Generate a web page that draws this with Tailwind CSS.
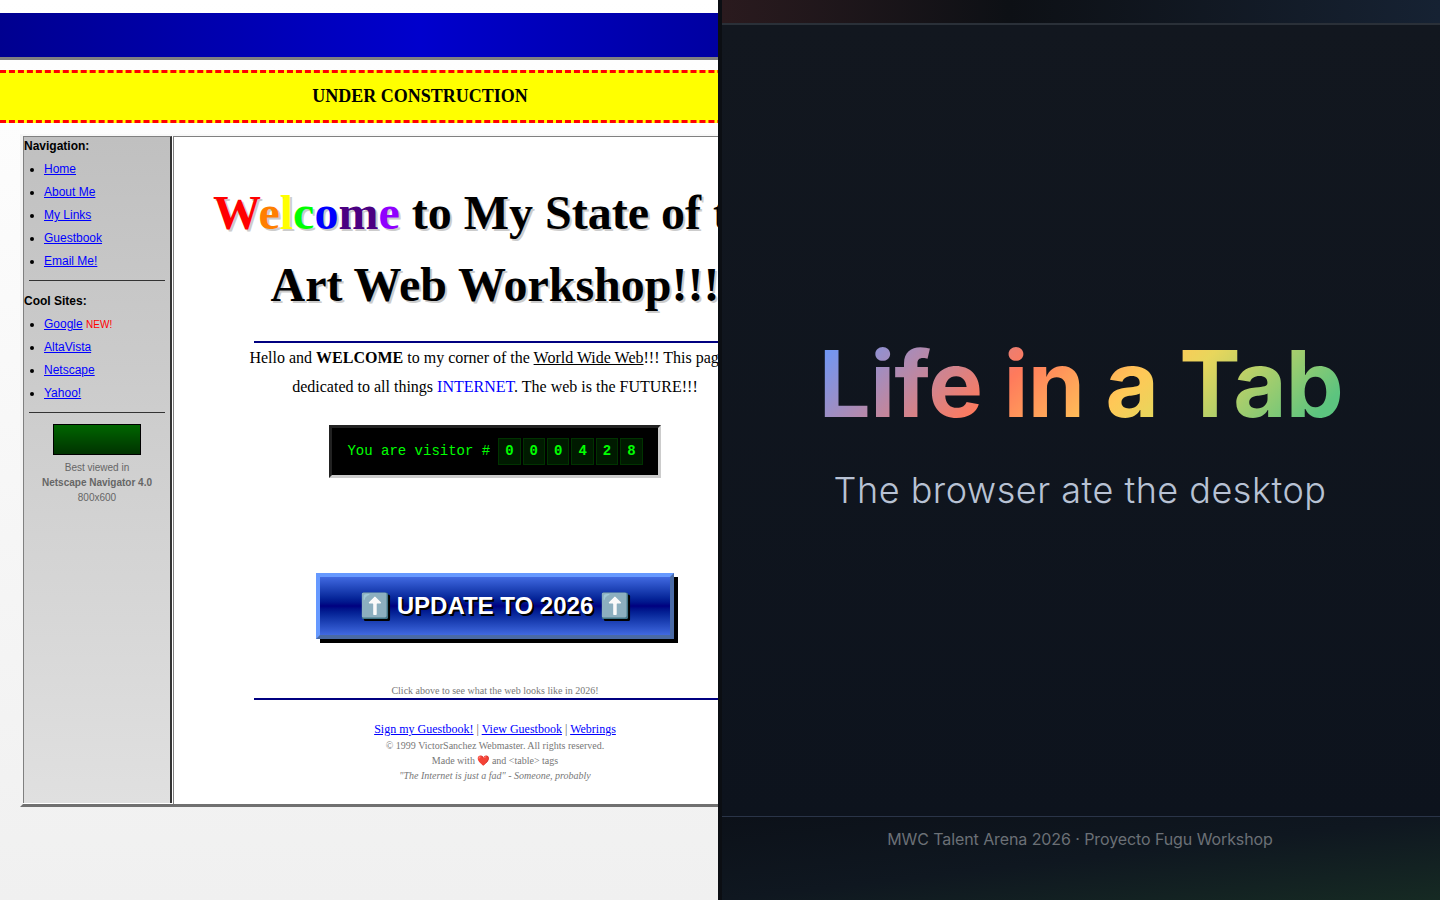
<!DOCTYPE html>
<html><head><meta charset="utf-8"><script src="https://cdn.jsdelivr.net/npm/@tailwindcss/browser@4"></script></head>
<body class="m-0 h-[900px] w-[1440px] overflow-hidden flex bg-[#0f1520]">
<div class="w-[718px] h-[900px] shrink-0 overflow-hidden">
<div class="w-[840px] h-[900px] bg-gradient-to-b from-white to-[#f0f0f0] font-['Liberation_Serif',serif] text-black pt-[13px]">
  <div class="h-[47px] bg-gradient-to-r from-[#000090] via-[#0000cd] to-[#000090] border-b-[3px] border-[#808080]"></div>
  <div class="mt-[10px] h-[53px] bg-[#ffff00] border-y-[3px] border-dashed border-[#ff0000] flex items-center justify-center text-[18px] font-bold">UNDER CONSTRUCTION</div>
  <div class="mt-[11px] ml-[20px] w-[799px] h-[673px] flex bg-white border-l-[3px] border-t-2 border-l-[#f4f4f4] border-t-[#f8f8f8] border-b-[3px] border-b-[#707070]">
    <div class="w-[149px] h-[667px] border-l border-t border-[#808080] border-r-2 border-r-[#333333] bg-gradient-to-b from-[#c0c0c0] to-[#e0e0e0] font-['Liberation_Sans',sans-serif] text-[12px] text-black">
      <div class="font-bold h-[18px] leading-[18px]">Navigation:</div>
      <ul class="list-disc pl-[20px] mt-[3px] flex flex-col">
        <li class="h-[23px] leading-[23px]"><a class="text-[#0000ff] underline">Home</a></li>
        <li class="h-[23px] leading-[23px]"><a class="text-[#0000ff] underline">About Me</a></li>
        <li class="h-[23px] leading-[23px]"><a class="text-[#0000ff] underline">My Links</a></li>
        <li class="h-[23px] leading-[23px]"><a class="text-[#0000ff] underline">Guestbook</a></li>
        <li class="h-[23px] leading-[23px]"><a class="text-[#0000ff] underline">Email Me!</a></li>
      </ul>
      <div class="mt-[7px] mx-[5px] border-t border-[#333333]"></div>
      <div class="font-bold h-[18px] leading-[18px] mt-[11px]">Cool Sites:</div>
      <ul class="list-disc pl-[20px] mt-[3px] flex flex-col">
        <li class="h-[23px] leading-[23px]"><a class="text-[#0000ff] underline">Google</a> <span class="text-[#ff0000] text-[10px]">NEW!</span></li>
        <li class="h-[23px] leading-[23px]"><a class="text-[#0000ff] underline">AltaVista</a></li>
        <li class="h-[23px] leading-[23px]"><a class="text-[#0000ff] underline">Netscape</a></li>
        <li class="h-[23px] leading-[23px]"><a class="text-[#0000ff] underline">Yahoo!</a></li>
      </ul>
      <div class="mt-[7px] mx-[5px] border-t border-[#333333]"></div>
      <div class="mt-[11px] mx-auto w-[88px] h-[31px] border border-black bg-gradient-to-b from-[#006600] to-[#003300]"></div>
      <div class="mt-[5px] text-center text-[10px] text-[#666666] leading-[15px]">Best viewed in<br><b>Netscape Navigator 4.0</b><br>800x600</div>
    </div>
    <div class="ml-px w-[643px] h-full bg-white border-t border-l border-[#808080] flex flex-col items-center text-[16px]">
      <h1 class="mt-[40px] w-[640px] text-center text-[48px] leading-[72px] font-bold [text-shadow:2px_2px_#cccccc]"><span class="whitespace-nowrap"><span class="text-[#ff0000]">W</span><span class="text-[#ff7f00]">e</span><span class="text-[#ffff00]">l</span><span class="text-[#00ff00]">c</span><span class="text-[#0000ff]">o</span><span class="text-[#4b0082]">m</span><span class="text-[#8f00ff]">e</span> to My State of the</span><br>Art Web Workshop!!!</h1>
      <div class="mt-[20px] w-[483px] h-[2px] bg-[#000080]"></div>
      <p class="w-[600px] text-center leading-[29px]">Hello and <b>WELCOME</b> to my corner of the <u>World Wide Web</u>!!! This page is<br>dedicated to all things <span class="text-[#0000ff]">INTERNET</span>. The web is the FUTURE!!!</p>
      <div class="mt-[24px] w-[332px] h-[53px] border-[3px] border-t-[#222222] border-l-[#222222] border-r-[#cccccc] border-b-[#cccccc] bg-black flex items-center justify-center font-['Liberation_Mono',monospace] text-[14px] text-[#00ff00] gap-[2px]">
        <span class="mr-[6px]">You are visitor #</span>
        <span class="w-[22.4px] h-[27px] bg-[#001a00] border border-[#003300] flex items-center justify-center font-bold">0</span>
        <span class="w-[22.4px] h-[27px] bg-[#001a00] border border-[#003300] flex items-center justify-center font-bold">0</span>
        <span class="w-[22.4px] h-[27px] bg-[#001a00] border border-[#003300] flex items-center justify-center font-bold">0</span>
        <span class="w-[22.4px] h-[27px] bg-[#001a00] border border-[#003300] flex items-center justify-center font-bold">4</span>
        <span class="w-[22.4px] h-[27px] bg-[#001a00] border border-[#003300] flex items-center justify-center font-bold">2</span>
        <span class="w-[22.4px] h-[27px] bg-[#001a00] border border-[#003300] flex items-center justify-center font-bold">8</span>
      </div>
      <button class="mt-[95px] w-[358px] h-[66px] border-4 border-t-[#6699ff] border-l-[#6699ff] border-r-[#4a6aa5] border-b-[#4a6aa5] bg-gradient-to-b from-[#4169e1] via-[#000080] to-[#4169e1] shadow-[4px_4px_0_#000000] font-['Liberation_Sans',sans-serif] font-bold text-[24px] text-white [text-shadow:2px_2px_#000000]">⬆️ UPDATE TO 2026 ⬆️</button>
      <div class="mt-[46px] text-[10px] leading-[12px] text-[#777777]">Click above to see what the web looks like in 2026!</div>
      <div class="mt-px w-[483px] h-[2px] bg-[#000080]"></div>
      <div class="mt-[22px] text-[12px] leading-[15px] text-[#666666]"><a class="text-[#0000ff] underline">Sign my Guestbook!</a> | <a class="text-[#0000ff] underline">View Guestbook</a> | <a class="text-[#0000ff] underline">Webrings</a></div>
      <div class="text-[10px] leading-[15px] text-[#777777] text-center mt-px">© 1999 VictorSanchez Webmaster. All rights reserved.<br>Made with ❤️ and &lt;table&gt; tags<br><i>"The Internet is just a fad" - Someone, probably</i></div>
    </div>
  </div>
</div>
</div>
<div class="flex-1 h-[900px] flex flex-col border-l-4 border-[#0b0e13] bg-[#0f1520] font-['Inter',sans-serif]">
  <div class="h-[25px] shrink-0 border-b-2 border-[#2a3038] bg-gradient-to-r from-[#2a1a1e] via-[#0d1015] via-40% to-[#162233]"></div>
  <div class="flex-1 flex flex-col items-center justify-center pb-px bg-gradient-to-b from-[#12171f] to-[#0d131d]">
    <h1 class="text-[92px] leading-[110px] font-bold tracking-[-0.7px] bg-[linear-gradient(135deg,#6699ff_2%,#ff7a5c_38%,#ffc857_58%,#e8d65c_66%,#5cc47f_92%)] bg-clip-text text-transparent whitespace-nowrap">Life in a Tab</h1>
    <p class="mt-[29px] pr-[2px] text-[36px] leading-[44px] text-[#b8c2d4] font-light tracking-[0.5px]">The browser ate the desktop</p>
  </div>
  <div class="h-[84px] shrink-0 border-t border-[#2a3448] bg-gradient-to-br from-[#0c1119] via-[#0f1720] to-[#162a23] flex justify-center pt-[12px] pr-[2px] text-[16px] leading-[20px] tracking-[-0.09px] text-[#6b7076]">MWC Talent Arena 2026 · Proyecto Fugu Workshop</div>
</div>
</body></html>
